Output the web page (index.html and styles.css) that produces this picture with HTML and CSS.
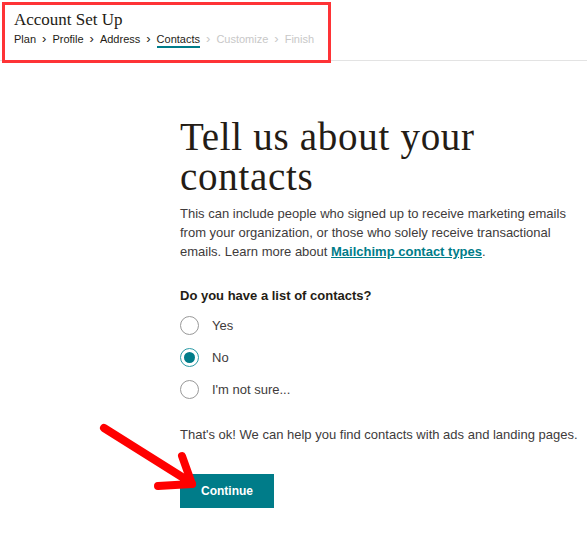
FILE: index.html
```html
<!DOCTYPE html>
<html lang="en">
<head>
    <meta charset="UTF-8" />
    <title>Account Set Up - Contacts</title>
    <link rel="stylesheet" href="styles.css">
</head>
<body>

    <header class="setup-header">
        <h1 class="setup-title">Account Set Up</h1>
        <ol class="steps">
            <li class="step done">Plan</li>
            <li class="sep">&rsaquo;</li>
            <li class="step done">Profile</li>
            <li class="sep">&rsaquo;</li>
            <li class="step done">Address</li>
            <li class="sep">&rsaquo;</li>
            <li class="step current">Contacts</li>
            <li class="sep muted">&rsaquo;</li>
            <li class="step muted">Customize</li>
            <li class="sep muted">&rsaquo;</li>
            <li class="step muted">Finish</li>
        </ol>
        <div class="highlight-box"></div>
    </header>

    <main class="content">
        <h2 class="heading">Tell us about your contacts</h2>
        <p class="intro">
            This can include people who signed up to receive marketing emails
            from your organization, or those who solely receive transactional
            emails. Learn more about <a href="#">Mailchimp contact types</a>.
        </p>

        <fieldset class="question">
            <legend>Do you have a list of contacts?</legend>
            <label class="option"><span class="radio"></span>Yes</label>
            <label class="option"><span class="radio checked"></span>No</label>
            <label class="option"><span class="radio"></span>I'm not sure...</label>
        </fieldset>

        <p class="note">That's ok! We can help you find contacts with ads and landing pages.</p>

        <div class="actions">
            <button class="btn-continue">Continue</button>
            <svg class="arrow" width="110" height="80" viewBox="0 0 110 80">
                <g stroke="#ff0000" stroke-width="8" stroke-linecap="round" fill="none">
                    <line x1="6" y1="6" x2="92" y2="60"/>
                    <line x1="84" y1="34" x2="94" y2="62"/>
                    <line x1="60" y1="64" x2="94" y2="62"/>
                </g>
            </svg>
        </div>
    </main>

</body>
</html>
```

FILE: styles.css
```css
* {
    margin: 0;
    padding: 0;
    box-sizing: border-box;
}

body {
    font-family: 'Liberation Sans', Arial, sans-serif;
    background-color: #fff;
    color: #241c15;
}

.setup-header {
    position: relative;
    height: 61px;
    padding: 10px 14px 0;
    border-bottom: 1px solid #e3e3e3;
}

.setup-title {
    font-family: 'Liberation Serif', 'Times New Roman', serif;
    font-weight: normal;
    font-size: 17px;
    line-height: 18px;
    color: #241c15;
    margin-top: 1px;
}

.steps {
    display: flex;
    align-items: center;
    list-style: none;
    gap: 6px;
    margin-top: 2px;
    font-size: 11px;
}

.step {
    padding-bottom: 1px;
    border-bottom: 2px solid transparent;
}

.step.current {
    border-bottom-color: #007c89;
}

.sep {
    font-size: 13px;
    padding-bottom: 3px;
}

.muted {
    color: #c8c8c8;
}

.highlight-box {
    position: absolute;
    left: 2px;
    top: 2px;
    width: 329px;
    height: 61px;
    border: 3px solid #fe3336;
}

.content {
    width: 405px;
    margin-left: 180px;
    padding-top: 56px;
}

.heading {
    font-family: 'Liberation Serif', 'Times New Roman', serif;
    font-weight: normal;
    font-size: 39px;
    line-height: 40px;
    letter-spacing: 0.7px;
    color: #241c15;
    width: 330px;
}

.intro {
    margin-top: 7px;
    font-size: 13px;
    line-height: 19px;
    color: #403b3b;
}

.intro a {
    color: #007c89;
    font-weight: bold;
    text-decoration: underline;
}

.question {
    border: none;
    margin-top: 27px;
}

.question legend {
    font-size: 13px;
    font-weight: bold;
    color: #241c15;
    margin-bottom: 6px;
}

.option {
    display: flex;
    align-items: center;
    gap: 13px;
    height: 32px;
    font-size: 13px;
    color: #403b3b;
}

.radio {
    width: 19px;
    height: 19px;
    border: 1.5px solid #999;
    border-radius: 50%;
    display: flex;
    align-items: center;
    justify-content: center;
}

.radio.checked {
    border-color: #2a9aa5;
}

.radio.checked::after {
    content: '';
    width: 11px;
    height: 11px;
    border-radius: 50%;
    background-color: #007c89;
}

.note {
    margin-top: 22px;
    font-size: 13px;
    color: #403b3b;
}

.actions {
    position: relative;
    margin-top: 32px;
}

.btn-continue {
    width: 94px;
    height: 34px;
    border: none;
    background-color: #007c89;
    color: #fff;
    font-family: 'Liberation Sans', Arial, sans-serif;
    font-size: 12px;
    font-weight: bold;
}

.arrow {
    position: absolute;
    left: -82px;
    top: -52px;
}
```
